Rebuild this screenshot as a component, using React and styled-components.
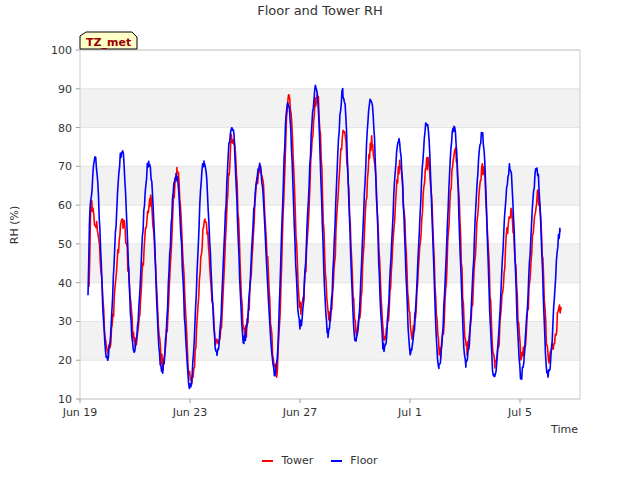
import React from "react";
import styled, { createGlobalStyle } from "styled-components";

const Global = createGlobalStyle`
  body { margin: 0; background: #fff; font-family: "DejaVu Sans", sans-serif; }
`;

const Page = styled.div`
  width: 640px;
  height: 480px;
  display: flex;
  flex-direction: column;
  color: #333;
`;

const Title = styled.div`
  height: 22px;
  line-height: 22px;
  text-align: center;
  font-size: 13px;
  color: #333;
`;

const Legend = styled.div`
  display: flex;
  justify-content: center;
  gap: 18px;
  margin-top: 14px;
  font-size: 11px;
`;

const LegendItem = styled.div`
  display: flex;
  align-items: center;
  gap: 8px;
`;

const Swatch = styled.span`
  width: 11px;
  height: 2px;
  background: ${(p) => p.color};
`;

const X0 = 80, X1 = 580, Y0 = 50, Y1 = 399;
const yv = (v) => Y1 - (v - 10) * ((Y1 - Y0) / 90);

const blueExt = [
  [88, 38], [90, 60], [95, 72], [107, 20], [122, 74], [134, 22], [149, 71], [162, 17],
  [176, 68], [190, 13], [204, 71], [217, 22], [232, 81], [244, 25], [259, 70], [275, 16],
  [288, 86], [300, 29], [316, 90], [328, 27], [343, 89], [356, 25], [371, 88], [384, 23],
  [399, 76], [411, 22], [427, 81], [439, 19], [454, 80], [466, 19], [482, 78], [494, 16],
  [510, 70], [521, 16], [537, 69], [548, 16], [560, 53],
];
const redMod = [0, 0, -16, 2, -18, 3, -10, 2, 0, 1, -16, 1, -3, 2, 0, 1, 1, 4, -2, 4, -11, 3, -12, 3, -6, 5, -10, 3, -6, 4, -9, 4, -12, 5, -7, 4, -20];

let seed = 7;
const rnd = () => ((seed = (seed * 16807) % 2147483647) / 2147483647 - 0.5);

function series(ext, noise, dx) {
  const pts = [];
  for (let i = 0; i < ext.length - 1; i++) {
    const [xa, va] = ext[i], [xb, vb] = ext[i + 1];
    for (let x = xa; x < xb; x += 0.7) {
      const t = (x - xa) / (xb - xa);
      const v = va + (vb - va) * (1 - Math.cos(Math.PI * t)) / 2 + rnd() * noise;
      pts.push(`${(x + dx).toFixed(1)},${yv(v).toFixed(1)}`);
    }
  }
  const l = ext[ext.length - 1];
  pts.push(`${l[0] + dx},${yv(l[1])}`);
  return pts.join(" ");
}

const blue = series(blueExt, 2.5, 0);
const red = series(blueExt.map(([x, v], i) => [x, v + (redMod[i] || 0)]), 4, 1);

const yTicks = [10, 20, 30, 40, 50, 60, 70, 80, 90, 100];
const xTicks = [[80, "Jun 19"], [190, "Jun 23"], [300, "Jun 27"], [410, "Jul 1"], [520, "Jul 5"]];

function Chart() {
  return (
    <svg width="640" height="418" viewBox="0 22 640 418" style={{ display: "block" }}>
      <g fontFamily="DejaVu Sans, sans-serif" fontSize="11" fill="#333">
        {[20, 40, 60, 80].map((v) => (
          <rect key={v} x={X0} y={yv(v + 10)} width={X1 - X0} height={yv(v) - yv(v + 10)} fill="#f2f2f2" />
        ))}
        {yTicks.map((v) => (
          <g key={v}>
            <line x1={X0} x2={X1} y1={yv(v)} y2={yv(v)} stroke="#e4e4e4" />
            <line x1={X0 - 4} x2={X0} y1={yv(v)} y2={yv(v)} stroke="#999" />
            <text x={X0 - 8} y={yv(v) + 4} textAnchor="end">{v}</text>
          </g>
        ))}
        <rect x={X0} y={Y0} width={X1 - X0} height={Y1 - Y0} fill="none" stroke="#ccc" />
        {xTicks.map(([x, t]) => (
          <g key={t}>
            <line x1={x} x2={x} y1={Y1} y2={Y1 + 4} stroke="#999" />
            <text x={x} y={Y1 + 17} textAnchor="middle">{t}</text>
          </g>
        ))}
        <text x={578} y={433} textAnchor="end">Time</text>
        <text transform="translate(18,225) rotate(-90)" textAnchor="middle">RH (%)</text>
        <polyline points={red} fill="none" stroke="#ff0000" strokeWidth="1.6" strokeLinejoin="round" />
        <polyline points={blue} fill="none" stroke="#0000ff" strokeWidth="1.6" strokeLinejoin="round" />
        <path d="M80,49 L80,36 L86,32 L132,32 L137,37 L137,49 Z" fill="#ffffc8" stroke="#000" strokeWidth="1" />
        <text x={86} y={46} fill="#990000" fontWeight="bold">TZ_met</text>
      </g>
    </svg>
  );
}

export default function App() {
  return (
    <Page>
      <Global />
      <Title>Floor and Tower RH</Title>
      <Chart />
      <Legend>
        <LegendItem><Swatch color="#ff0000" />Tower</LegendItem>
        <LegendItem><Swatch color="#0000ff" />Floor</LegendItem>
      </Legend>
    </Page>
  );
}
